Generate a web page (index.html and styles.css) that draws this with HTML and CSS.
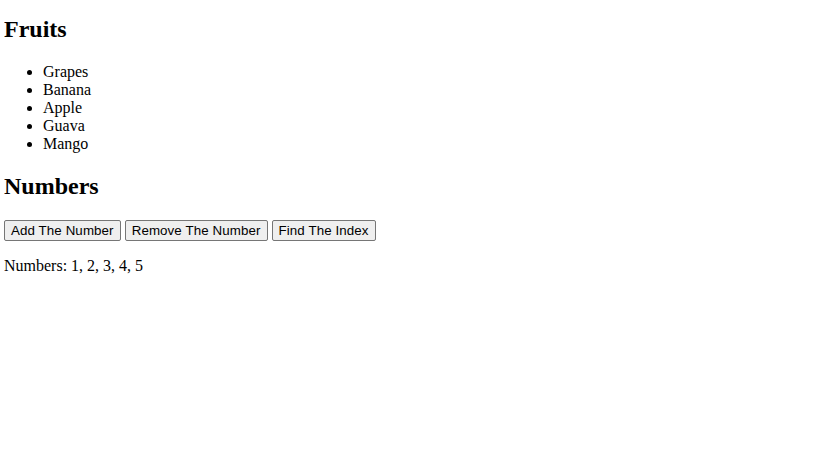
FILE: index.html
```html
<!DOCTYPE html>
<html>
<head>
<meta charset="utf-8">
<link rel="stylesheet" href="styles.css">
</head>
<body>
<h2 class="title first">Fruits</h2>
<ul class="fruits">
<li>Grapes</li>
<li>Banana</li>
<li>Apple</li>
<li>Guava</li>
<li>Mango</li>
</ul>
<h2 class="title">Numbers</h2>
<div class="actions">
<button class="btn">Add The Number</button>
<button class="btn">Remove The Number</button>
<button class="btn">Find The Index</button>
</div>
<p class="numbers">Numbers: 1, 2, 3, 4, 5</p>
</body>
</html>
```
FILE: styles.css
```css
body {
  margin: 4px;
  font-family: "Liberation Serif", serif;
  font-size: 16px;
  color: #000;
  background: #fff;
}
.title {
  font-size: 24px;
  font-weight: bold;
  margin: 19.92px 0;
}
.title.first {
  margin-top: 11.92px;
}
.fruits {
  margin: 16px 0;
  padding-left: 39px;
}
.actions {
  margin: 16px 0;
}
.btn {
  font-family: "Liberation Sans", Arial, sans-serif;
  font-size: 13.333px;
  letter-spacing: 0.1px;
  padding: 2px 6px;
  border: 1px solid #767676;
  border-radius: 2px;
  background: #efefef;
  color: #000;
  margin: 0;
}
.numbers {
  margin: 16px 0;
}
```
